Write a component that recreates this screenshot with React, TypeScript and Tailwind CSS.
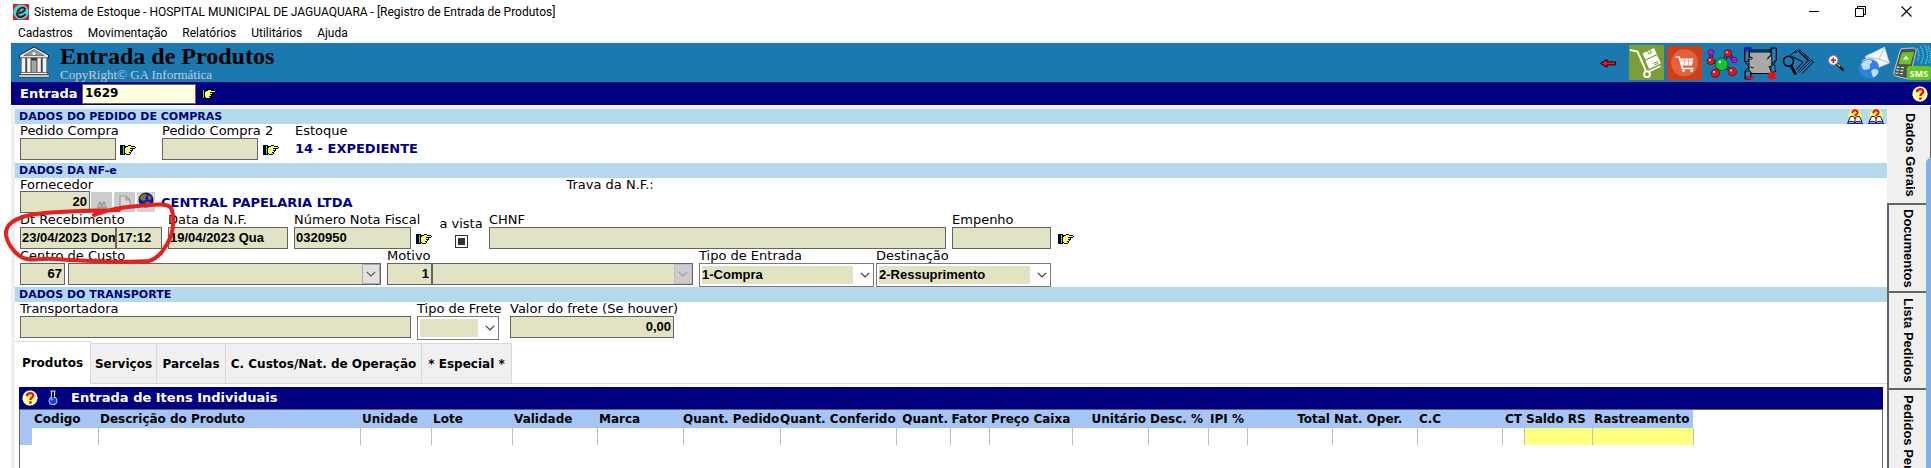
import React from 'react';

const LABEL = 'block h-[14px] whitespace-nowrap text-[13px] leading-[14px] text-black';
const FIELD =
  'block h-[22px] w-full min-w-0 rounded-none border border-[#646464] bg-[#e1e3c4] pl-px pb-[2px] text-[13px] font-bold text-black outline-none font-["Liberation_Sans",Arial,sans-serif]';

/* ---------- icons ---------- */

function AppIcon() {
  return (
    <svg className="h-4 w-4 shrink-0" viewBox="0 0 16 16" aria-hidden="true">
      <rect width="16" height="16" fill="#f01818" />
      <circle cx="8" cy="8" r="7.6" fill="#2fe0e6" />
      <path d="M4.500 9C8.500 9 12 7.500 11.800 5 11.400 2.600 7 3.500 5 7 3 10.800 5 13.500 8 13 10 12.600 11.500 11.500 12.500 10" fill="none" stroke="#16181c" strokeWidth="2" />
      <path d="M5.200 8.200C8 8.200 11 6.900 11 5.300 10.800 3.800 8 4 6.200 6.500 4 10 5.300 12.200 7.500 12" fill="none" stroke="#e8322a" strokeWidth=".9" />
    </svg>
  );
}

function BankIcon() {
  return (
    <svg className="h-8 w-8 shrink-0" viewBox="0 0 32 32" aria-hidden="true">
      <path d="M16 1 1.500 9v3h29V9z" fill="#e2e2e2" stroke="#222" strokeWidth="1" />
      <path d="M16 3.500 6 9.500h20z" fill="#9a9a9a" stroke="#444" strokeWidth=".6" />
      <circle cx="16" cy="7.500" r="1.500" fill="#efefef" />
      <rect x="3.500" y="12" width="25" height="15" fill="#3a3a3a" />
      <g fill="#f2f2f2" stroke="#777" strokeWidth=".5">
        <rect x="3.500" y="12" width="3.800" height="15" />
        <rect x="9" y="12" width="3.800" height="15" />
        <rect x="19.200" y="12" width="3.800" height="15" />
        <rect x="24.700" y="12" width="3.800" height="15" />
      </g>
      <rect x="13.500" y="14.500" width="5" height="12.500" fill="#a5a5a5" />
      <rect x="2.500" y="26.500" width="27" height="2.200" fill="#f2f2f2" stroke="#333" strokeWidth=".6" />
      <rect x=".8" y="28.700" width="30.400" height="2.600" fill="#cfcfcf" stroke="#333" strokeWidth=".7" />
    </svg>
  );
}

const HAND_ROWS = [
  'KKKKK...KKK.....',
  'KKKCKKKKYYYKKKK.',
  'KKKCKKYYYYYYYYYK',
  'KKKCKYYYYYKKKKK.',
  'KKKCKYYYYYYYK...',
  'KKKCKYYYYYKKK...',
  'KKKCKYYYYYYK....',
  'KKKCKYYYYKK.....',
  'KKKCKKYYYYK.....',
  'KKKKK.KKKK......',
];
const HAND_COLORS: Record<string, string> = { K: '#000000', C: '#19e5e8', Y: '#ffff66' };

function HandIcon() {
  return (
    <svg className="block h-[10px] w-4" viewBox="0 0 16 10" aria-hidden="true" shapeRendering="crispEdges">
      {HAND_ROWS.flatMap((row, y) =>
        row.split('').map((c, x) => (c === '.' ? null : <rect key={`${x}-${y}`} x={x} y={y} width="1" height="1" fill={HAND_COLORS[c]} />)),
      )}
    </svg>
  );
}

function HelpIcon() {
  return (
    <svg className="block h-4 w-4" viewBox="0 0 16 16" aria-hidden="true">
      <circle cx="8" cy="8" r="7.500" fill="#ffff8c" />
      <circle cx="8" cy="8" r="7" fill="none" stroke="#ffffe8" strokeWidth="1.200" strokeDasharray="1 1" />
      <path d="M5 6.200C4.800 2.200 11.300 2 11.200 5.600 11.100 7.600 8.600 7.500 8.400 10" fill="none" stroke="#e00f0f" strokeWidth="2.300" />
      <rect x="7.200" y="11.300" width="2.500" height="2.400" fill="#e00f0f" />
    </svg>
  );
}

function BookIcon() {
  return (
    <svg className="block h-[15px] w-4" viewBox="0 0 16 15" aria-hidden="true">
      <circle cx="8" cy="6.500" r="6.500" fill="#ffff60" />
      <path d="M8 13.500C6 11.800 3 12 1 13.200L3.500 7.500C5.500 7 7.500 8 8 9.500 8.500 8 10.500 7 12.500 7.500l2.500 5.700C13 12 10 11.800 8 13.500z" fill="#fff" stroke="#000" strokeWidth=".9" />
      <path d="M0 14.300h16" stroke="#0a1490" strokeWidth="1.200" />
      <path d="M8 10v3.500" stroke="#000" strokeWidth=".9" />
      <path d="M5.400 4.200C5.200.400 10.800.500 10.600 3.700 10.500 5.400 8.200 5.400 8.100 7.200" fill="none" stroke="#e00f0f" strokeWidth="2" />
      <rect x="7.100" y="8.300" width="2" height="1.800" fill="#e00f0f" />
    </svg>
  );
}

function FlaskIcon() {
  return (
    <svg className="block h-4 w-3" viewBox="0 0 12 16" aria-hidden="true">
      <path d="M3.500 1h5M4.500 1.500v5M7.500 1.500v5" stroke="#e8e8e8" strokeWidth="1.200" fill="none" />
      <circle cx="6" cy="10.800" r="4" fill="#1a3cf0" stroke="#d9d9d9" strokeWidth="1" />
      <circle cx="4.700" cy="9.600" r="1" fill="#5ee8ff" />
      <rect x="5.300" y="2" width="1.400" height="5.500" fill="#000" />
    </svg>
  );
}

function Chevron({ color }: { color: string }) {
  return (
    <svg className="h-[6px] w-[10px]" viewBox="0 0 10 6" aria-hidden="true">
      <path d="M.8.8 5 5 9.200.8" fill="none" stroke={color} strokeWidth="1.200" />
    </svg>
  );
}

function ArrowIcon() {
  return (
    <svg className="h-[38px] w-[38px]" viewBox="0 0 38 38">
      <path d="M11.500 20.300 18 16.500v2.400h8.500v3H18v2.400z" fill="#ff0a0a" stroke="#000" strokeWidth=".9" />
    </svg>
  );
}

function TruckIcon() {
  return (
    <svg className="h-[38px] w-[38px]" viewBox="0 0 38 38">
      <rect x="2" y="2" width="35" height="35" rx="1" fill="#7a9f36" />
      <path d="M3 7l7.500 1.500L19 28M22 28.500l11.500-5.500" fill="none" stroke="#fff" strokeWidth="1.900" />
      <circle cx="20" cy="31.200" r="2.900" fill="none" stroke="#fff" strokeWidth="1.900" />
      <g fill="#fff">
        <path d="m15.500 10.500 11.500-5.500 3 6.500-11.500 5.500z" />
        <path d="m18.300 17.500 11.700-5.500 3.800 8.300-11.600 5.700z" />
      </g>
      <path d="m20.500 8 1.500 3 2.500-1.200-1.500-3M26.500 20.500l4.500-2.200M27.300 22l4.500-2.200M18 17.300l12.300-6" fill="none" stroke="#7a9f36" strokeWidth="1" />
    </svg>
  );
}

function CartIcon() {
  return (
    <svg className="h-[38px] w-[38px]" viewBox="0 0 38 38">
      <rect x="2" y="3" width="35" height="34" rx="1.500" fill="#cf3f17" />
      <circle cx="19.500" cy="19.800" r="13.500" fill="#e4613c" />
      <path d="M10.500 14h3.600l3.400 11.500h11" fill="none" stroke="#fff" strokeWidth="1.700" />
      <path d="M15 15.500h13.500L27 22.500H17z" fill="#fff" />
      <path d="M15.500 17.900h13M19 15.500l.8 7M23.500 15.500v7" stroke="#e4613c" strokeWidth=".5" />
      <circle cx="18.500" cy="27.800" r="1.400" fill="#fff" />
      <circle cx="26.800" cy="27.800" r="1.400" fill="#fff" />
    </svg>
  );
}

function MoleculeIcon() {
  return (
    <svg className="h-[38px] w-[38px]" viewBox="0 0 38 38">
      <path d="M8 9.500v8.500l10.500 3.300L25 10.300l6 7M18.700 21.300l-6.400 9M18.700 21.300l10.600 7.400" fill="none" stroke="#0b1b8c" strokeWidth="3.400" />
      <path d="M8 9.500v8.500l10.500 3.300L25 10.300l6 7M18.700 21.300l-6.400 9M18.700 21.300l10.600 7.400" fill="none" stroke="#2b6cf0" strokeWidth="1.200" />
      <g stroke="#111" strokeWidth=".5">
        <circle cx="18.700" cy="21.300" r="6.300" fill="#13c42a" />
        <circle cx="8" cy="9.300" r="2.900" fill="#c414c8" />
        <circle cx="31.300" cy="17" r="2.900" fill="#c414c8" />
        <circle cx="7.700" cy="18" r="3.700" fill="#e31616" />
        <circle cx="25" cy="10.300" r="3.700" fill="#e31616" />
        <circle cx="12.300" cy="30.300" r="4.200" fill="#e31616" />
        <circle cx="29.300" cy="28.700" r="4.200" fill="#e31616" />
      </g>
      <g fill="#fff">
        <circle cx="17" cy="19" r="1.200" />
        <circle cx="6.800" cy="17" r=".9" />
        <circle cx="24" cy="9.300" r=".9" />
        <circle cx="11" cy="29" r="1" />
        <circle cx="28" cy="27.500" r="1" />
      </g>
    </svg>
  );
}

function FrameIcon() {
  return (
    <svg className="h-[38px] w-[38px]" viewBox="0 0 38 38">
      <rect x="8" y="9" width="23" height="21.500" fill="#a9a9a9" stroke="#000" strokeWidth="1" />
      <path d="M3.500 5h5v8.500l3 1.500-2 2M3.500 5v13l4.500 6-4 4v8h6v-7M30 5h5.500v12l-4 6 3.500 6M30 5v7l-3.500 3M30 12.500l-4 4M9.500 24l3 1M28 23l2.500 6M31.500 23 28 24M9 7h21" fill="none" stroke="#000" strokeWidth="1" />
      <path d="M4 8h4v8l-2 3-2-2zM30.500 5.500H35v11l-4 4zM4.500 28h5v6h-5zM30 22h4v7h-4z" fill="#2b82b8" stroke="#000" strokeWidth=".7" />
      <rect x="3.500" y="4" width="7" height="2.800" fill="#0a18f0" />
      <rect x="5.500" y="33.500" width="7" height="2.500" fill="#fb0808" />
      <rect x="27.500" y="29.500" width="7" height="6.500" fill="#fb0808" />
    </svg>
  );
}

function SheetsIcon() {
  return (
    <svg className="h-[38px] w-[38px]" viewBox="0 0 38 38">
      <path d="M11.500 12.500 17.500 6.500 29 17.500 19 28.500M15 9.500l3.500-1M18 7 31.500 18.500 20.500 29.500M20 6.500 34.500 19 23 30.500M13 13.500l11 5.500-6.500 7.500" fill="none" stroke="#000" strokeWidth="1" />
      <circle cx="9.500" cy="18.300" r="5" fill="#1c79b0" stroke="#000" strokeWidth="1.500" />
      <path d="m12 22.500 4.800 9" stroke="#000" strokeWidth="2.800" />
    </svg>
  );
}

function MagnifierIcon() {
  return (
    <svg className="h-[38px] w-[38px]" viewBox="0 0 38 38">
      <circle cx="16.300" cy="17.300" r="4.700" fill="#fff" stroke="#777" strokeWidth="1" strokeDasharray="1.500 .8" />
      <path d="M16.300 14.600v5.400M13.600 17.300h5.400" stroke="#f01010" strokeWidth="1.600" />
      <path d="m20 21 6.500 6.500" stroke="#000" strokeWidth="2.400" />
      <path d="m20.500 21 2.500 2.500" stroke="#e8c33a" strokeWidth="1.200" />
    </svg>
  );
}

function MailIcon() {
  return (
    <svg className="h-[38px] w-[38px]" viewBox="0 0 38 38">
      <path d="M10 13.500 29.500 4 34.500 20l-17 7z" fill="#f4f6fa" stroke="#c5cad6" strokeWidth=".6" />
      <path d="m10 13.500 14 2.500 5.500-12M34.500 20 24 16" fill="none" stroke="#aeb5c5" strokeWidth=".8" />
      <circle cx="14" cy="25.300" r="10.300" fill="#2c82dc" />
      <path d="M6 21.500c2-4.500 8-6 10.500-4s-3 3.500-1.500 6-6 5-7.500 2zM16 28c2-3 7-2.500 7.500 0s-3 6-5.500 6.500z" fill="#b9defa" />
      <path d="M7 18c4-3 10-3 14 0" stroke="#fff" strokeWidth="1" fill="none" opacity=".7" />
    </svg>
  );
}

function SmsIcon() {
  return (
    <svg className="h-[38px] w-[38px]" viewBox="0 0 38 38">
      <path d="M10 5.500 20 5c2.500 0 3.500 1.500 3 3.500L17 33c-.7 2-2 3-4 2.500L3 33c-2-.6-2.600-2-2-4L7 8c.5-1.600 1.400-2.500 3-2.500z" fill="#4a534f" stroke="#c8cec9" strokeWidth="1" />
      <path d="m9 9.500 12-.5-3.500 12.500-12-.5z" fill="#74c02c" />
      <path d="m13 12.500-3 4h6z" fill="#eaf7d8" />
      <path d="m3.500 24 3 .4M8 24.500l3 .4M2.800 27l3 .4M7.300 27.500l3 .4M2.300 30l3 .4M6.800 30.500l3 .4" stroke="#e6e6e6" strokeWidth="1.200" />
      <path d="M24 5c2.500 4 2.500 9 0 13M27.500 3c3.500 6 3.500 12.500 0 18M31.500 2c4 6.500 4 14 0 19.500M35 3c3 6 3 12.500.5 17.500" fill="none" stroke="#3fd3e6" strokeWidth="1.300" strokeDasharray="1.500 .8" />
      <rect x="13.700" y="23" width="24.300" height="14" rx="3" fill="#66c41f" />
      <text x="26" y="33.500" textAnchor="middle" fontSize="9" fontWeight="700" fill="#fff" fontFamily="Open Sans, sans-serif">SMS</text>
    </svg>
  );
}

/* ---------- form parts ---------- */

type FieldProps = { id: string; label: string; width: string; value?: string; right?: boolean };

function Field({ id, label, width, value = '', right = false }: FieldProps) {
  return (
    <div className={`${width} shrink-0`}>
      <label htmlFor={id} className={LABEL}>{label}</label>
      <input id={id} defaultValue={value} className={`${FIELD} ${right ? 'pr-[2px] text-right' : ''}`} />
    </div>
  );
}

function DropDown({ id, label, width, options }: { id: string; label: string; width: string; options: string[] }) {
  return (
    <div className={`${width} shrink-0`}>
      <label htmlFor={id} className={LABEL}>{label}</label>
      <div className="relative flex h-6 border border-[#7a7a7a] bg-white py-[2px] pl-[2px] pr-5">
        <select
          id={id}
          className='h-[18px] min-w-0 flex-1 appearance-none rounded-none bg-[#e1e3c4] text-[13px] leading-[18px] font-bold text-black outline-none font-["Liberation_Sans",Arial,sans-serif]'
        >
          {options.map((o) => <option key={o}>{o}</option>)}
        </select>
        <span className="pointer-events-none absolute inset-y-0 right-0 flex w-4 items-center justify-center">
          <Chevron color="#3c3c3c" />
        </span>
      </div>
    </div>
  );
}

function LookupSelect({ label, width, disabled = false }: { label: string; width: string; disabled?: boolean }) {
  return (
    <div className={`${width} relative mt-[14px] flex h-[22px] shrink-0 border border-[#646464] bg-[#e1e3c4] pr-[18px]`}>
      <select aria-label={label} disabled={disabled} className="min-w-0 flex-1 appearance-none bg-[#e1e3c4] outline-none" />
      <span className={`pointer-events-none absolute inset-y-0 right-0 flex w-[18px] items-center justify-center border ${disabled ? 'border-[#bfbfbf] bg-[#cccccc]' : 'border-[#adadad] bg-[#e1e1e1]'}`}>
        <Chevron color={disabled ? '#a0a0a0' : '#555555'} />
      </span>
    </div>
  );
}

function HandButton({ label, className = '' }: { label: string; className?: string }) {
  return (
    <button type="button" aria-label={label} className={`mb-[5px] self-end ${className}`}>
      <HandIcon />
    </button>
  );
}

function Band({ title, children }: { title: string; children?: React.ReactNode }) {
  return (
    <div className="flex h-[15px] items-center justify-between bg-[#b5d9ec] pl-[4px] pr-[3px]">
      <h2 className="text-[11px] leading-[15px] font-bold whitespace-nowrap text-[#000080]">{title}</h2>
      {children}
    </div>
  );
}

const TOOLS = [
  { name: 'Voltar', Icon: ArrowIcon },
  { name: 'Estoque', Icon: TruckIcon },
  { name: 'Compras', Icon: CartIcon },
  { name: 'Produtos', Icon: MoleculeIcon },
  { name: 'Ajustar', Icon: FrameIcon },
  { name: 'Pesquisar', Icon: SheetsIcon },
  { name: 'Ampliar', Icon: MagnifierIcon },
  { name: 'E-mail', Icon: MailIcon },
  { name: 'SMS', Icon: SmsIcon },
];

const COLUMNS = [
  { t: '', w: 12 },
  { t: 'Codigo', w: 66 },
  { t: 'Descrição do Produto', w: 262 },
  { t: 'Unidade', w: 71 },
  { t: 'Lote', w: 81 },
  { t: 'Validade', w: 85 },
  { t: 'Marca', w: 86 },
  { t: 'Quant. Pedido', w: 97, r: true },
  { t: 'Quant. Conferido', w: 116, r: true },
  { t: 'Quant.', w: 54, r: true },
  { t: 'Fator', w: 39, r: true },
  { t: 'Preço Caixa', w: 83 },
  { t: 'Unitário', w: 76, r: true },
  { t: 'Desc. %', w: 60 },
  { t: 'IPI %', w: 39 },
  { t: 'Total', w: 85, r: true },
  { t: 'Nat. Oper.', w: 85 },
  { t: 'C.C', w: 85 },
  { t: 'CT', w: 22, r: true },
  { t: 'Saldo RS', w: 68, y: true },
  { t: 'Rastreamento', w: 101, y: true },
];

const TABS = [
  { t: 'Serviços', w: 'w-[66px]' },
  { t: 'Parcelas', w: 'w-[69px]' },
  { t: 'C. Custos/Nat. de Operação', w: 'w-[196px]' },
  { t: '* Especial *', w: 'w-[90px]' },
];

export default function App() {
  return (
    <div className='flex h-screen flex-col overflow-hidden bg-white text-black font-["DejaVu_Sans",Verdana,sans-serif]'>
      {/* title bar */}
      <header className='flex h-6 items-center justify-between pr-[19px] pb-px pl-[13px] text-[12px] font-["Roboto",sans-serif]'>
        <div className="flex items-center gap-[5px]">
          <AppIcon />
          <span className="whitespace-nowrap">Sistema de Estoque - HOSPITAL MUNICIPAL DE JAGUAQUARA - [Registro de Entrada de Produtos]</span>
        </div>
        <div className="flex items-center gap-[35px]">
          <button type="button" aria-label="Minimizar"><svg className="block h-[11px] w-[11px]" viewBox="0 0 11 11"><path d="M0 5.500h10" stroke="#000" /></svg></button>
          <button type="button" aria-label="Restaurar"><svg className="block h-[11px] w-[11px]" viewBox="0 0 11 11"><path d="M.5 2.500h8v8h-8zM2.500 2.500v-2h8v8h-2" fill="none" stroke="#000" /></svg></button>
          <button type="button" aria-label="Fechar"><svg className="block h-[11px] w-[11px]" viewBox="0 0 11 11"><path d="m.5.5 10 10M10.500.5l-10 10" stroke="#000" strokeWidth="1.100" /></svg></button>
        </div>
      </header>

      <nav className='flex h-[19px] items-center gap-[15px] pb-px pl-[18px] text-[12px] font-["Roboto",sans-serif]'>
        {['Cadastros', 'Movimentação', 'Relatórios', 'Utilitários', 'Ajuda'].map((m) => (
          <button key={m} type="button">{m}</button>
        ))}
      </nav>

      <div className="flex min-h-0 flex-1 flex-col pl-[11px]">
        {/* page heading */}
        <div className="flex h-[39px] shrink-0 items-start justify-between bg-[#1c79b0] pl-[7px] outline-1 outline-[#f0f0f0]">
          <div className='flex items-center gap-[10px] font-["Liberation_Serif",serif]'>
            <BankIcon />
            <div>
              <h1 className="pt-px text-[24px] leading-[24px] font-bold whitespace-nowrap">Entrada de Produtos</h1>
              <p className="text-[13px] leading-[13px] whitespace-nowrap text-[#c3cbd2]">CopyRight© GA Informática</p>
            </div>
          </div>
          <div className="flex">
            {TOOLS.map(({ name, Icon }) => (
              <button key={name} type="button" aria-label={name} className="w-[38px]"><Icon /></button>
            ))}
          </div>
        </div>

        <div className="flex h-[23px] shrink-0 items-center bg-[#000080] pr-[3px] pl-[9px]">
          <label htmlFor="entrada" className="w-[62px] text-[13px] font-bold text-white">Entrada</label>
          <input id="entrada" defaultValue="1629" className="h-5 w-[114px] rounded-none border border-[#646464] bg-[#ffffe1] px-[2px] pb-px text-[12px] font-bold text-black outline-none" />
          <button type="button" aria-label="Localizar entrada" className="ml-[4px]"><HandIcon /></button>
          <button type="button" aria-label="Ajuda" className="ml-auto"><HelpIcon /></button>
        </div>

        <div className="relative mt-px flex min-h-0 flex-1">
          <main className="flex min-w-0 flex-1 flex-col border-t-[3px] border-l-4 border-[#efefef] bg-white">
            <Band title="DADOS DO PEDIDO DE COMPRAS">
              <div className="flex gap-[5px]">
                <button type="button" aria-label="Ajuda do pedido"><BookIcon /></button>
                <button type="button" aria-label="Ajuda do estoque"><BookIcon /></button>
              </div>
            </Band>
            <div className="flex h-[39px] pb-[3px] pl-[5px]">
              <Field id="pedido" label="Pedido Compra" width="w-[96px]" />
              <HandButton label="Localizar pedido" className="ml-[4px]" />
              <Field id="pedido2" label="Pedido Compra 2" width="ml-[26px] w-[96px]" />
              <HandButton label="Localizar pedido 2" className="ml-[5px]" />
              <div className="ml-4">
                <div className={LABEL}>Estoque</div>
                <div className="text-[13px] leading-[22px] font-bold text-[#000080]">14 - EXPEDIENTE</div>
              </div>
            </div>

            <Band title="DADOS DA NF-e" />
            <div className="relative pl-[5px]">
              <div className="flex">
                <div className="w-[70px] shrink-0">
                  <label htmlFor="fornecedor" className="block h-[13px] text-[13px] leading-[13px]">Fornecedor</label>
                  <input id="fornecedor" defaultValue="20" className={`${FIELD} pr-[2px] text-right`} />
                </div>
                <div className="ml-px flex h-[21px] items-stretch gap-[2px] self-end pb-px">
                  <button type="button" aria-label="Buscar" className="flex w-[21px] items-end justify-center bg-[#cccccc]">
                    <svg className="h-3 w-3" viewBox="0 0 12 12"><path d="M3 2h2v2h2V2h2v2l2 4v3H7.500V8h-3v3H1V8l2-4z" fill="#a3a3a3" stroke="#8f8f8f" strokeWidth=".5" /><path d="M2.500 9h1.500M8.500 9H10M3.500 5.500h1M7.500 5.500h1" stroke="#fff" /></svg>
                  </button>
                  <button type="button" aria-label="Novo" className="flex w-[21px] items-center justify-center bg-[#cccccc]">
                    <svg className="h-[14px] w-3" viewBox="0 0 12 14"><path d="M1 1h6l4 4v8H1zM7 1v4h4" fill="#d8d8d8" stroke="#9b9b9b" strokeWidth="1.200" /></svg>
                  </button>
                  <button type="button" aria-label="Internet" className="flex w-[18px] items-start justify-center bg-[#d3d3d3]">
                    <svg className="h-4 w-4" viewBox="0 0 16 16"><circle cx="8" cy="8" r="7" fill="#1212d8" stroke="#111" /><path d="M3 3.500 7 1.500l2 2-2 2.500 1 2-3 1-3-2zM10 3l3.500 2-1 3-2.500-.500zM7.500 10l4-.500.500 2.500-3 2.500-2-2z" fill="#77801a" /></svg>
                  </button>
                </div>
                <div className="ml-[6px] self-end text-[13px] leading-[21px] font-bold whitespace-nowrap text-[#000080]">CENTRAL PAPELARIA LTDA</div>
                <div className="ml-[214px] text-[13px] leading-[13px] whitespace-nowrap">Trava da N.F.:</div>
              </div>

              <div className="flex">
                <Field id="dtrec" label="Dt Recebimento" width="w-[96px]" value="23/04/2023 Dom" />
                <div className="mt-[14px] w-[46px]">
                  <input aria-label="Hora do recebimento" defaultValue="17:12" className={FIELD} />
                </div>
                <Field id="dtnf" label="Data da N.F." width="ml-[6px] w-[120px]" value="19/04/2023 Qua" />
                <Field id="numnf" label="Número Nota Fiscal" width="ml-[6px] w-[117px]" value="0320950" />
                <HandButton label="Localizar nota" className="ml-[5px]" />
                <div className="mr-1 ml-[5px] flex w-[48px] flex-col items-center pt-1">
                  <label htmlFor="avista" className="h-[18px] text-[13px] leading-[14px] whitespace-nowrap">a vista</label>
                  <input id="avista" type="checkbox" className="h-[13px] w-[13px] appearance-none border border-[#333] bg-[#333] p-0 shadow-[inset_0_0_0_2px_white]" />
                </div>
                <Field id="chnf" label="CHNF" width="w-[457px]" />
                <Field id="empenho" label="Empenho" width="ml-[6px] w-[99px]" />
                <HandButton label="Localizar empenho" className="ml-[7px]" />
              </div>

              <div className="flex">
                <Field id="ccusto" label="Centro de Custo" width="w-[45px]" value="67" right />
                <LookupSelect label="Nome do centro de custo" width="ml-[3px] w-[313px]" />
                <Field id="motivo" label="Motivo" width="ml-[6px] w-[45px]" value="1" right />
                <LookupSelect label="Descrição do motivo" width="w-[261px]" disabled />
                <DropDown id="tipo" label="Tipo de Entrada" width="ml-[6px] w-[175px]" options={['1-Compra']} />
                <DropDown id="dest" label="Destinação" width="ml-[2px] w-[175px]" options={['2-Ressuprimento']} />
              </div>

              {/* freehand mark around the receipt date */}
              <svg className="pointer-events-none absolute top-[22px] -left-[11px] h-[66px] w-[176px]" viewBox="4 200 176 66" aria-hidden="true">
                <path d="M119 210C84 211 50 211 30 215 12 219 5 226 6 235 8 247 19 258 27 259 34 261 40 258 54 259 84 261 120 263 149 261 158 259 167 247 171 236 174 226 174 214 171 208 168 202 150 205 128 207 114 208 104 212 94 215" fill="none" stroke="#e6211d" strokeWidth="4" strokeLinecap="round" />
              </svg>
            </div>

            <Band title="DADOS DO TRANSPORTE" />
            <div className="flex h-[39px] pl-[5px]">
              <Field id="transp" label="Transportadora" width="w-[391px]" />
              <DropDown id="frete" label="Tipo de Frete" width="ml-[6px] w-[82px]" options={['']} />
              <Field id="valor" label="Valor do frete (Se houver)" width="ml-[11px] w-[164px]" value="0,00" right />
            </div>

            {/* product tabs */}
            <div className="flex h-[43px] shrink-0 items-stretch text-[12px] font-bold" role="tablist">
              <button type="button" role="tab" aria-selected="true" className="w-[76px] border-t border-r border-[#d9d9d9] bg-white whitespace-nowrap">Produtos</button>
              {TABS.map((tab) => (
                <button key={tab.t} type="button" role="tab" aria-selected="false" className={`mt-[2px] ${tab.w} border-t border-r border-b border-[#d9d9d9] bg-[#f0f0f0] whitespace-nowrap`}>{tab.t}</button>
              ))}
              <div className="flex-1 border-b border-[#d9d9d9]" />
            </div>

            <section className="mt-[3px] mr-1 ml-1 flex min-h-0 flex-1 flex-col">
              <div className="flex h-[22px] shrink-0 items-center bg-[#000080] pl-[3px] text-white">
                <HelpIcon />
                <span className="ml-[9px]"><FlaskIcon /></span>
                <h2 className="ml-3 text-[13px] font-bold whitespace-nowrap">Entrada de Itens Individuais</h2>
              </div>
              <div className="min-h-0 flex-1 overflow-hidden border-x border-t border-[#646464]">
                <table className="w-px table-fixed border-collapse text-[12px]">
                  <colgroup>{COLUMNS.map((c, i) => <col key={i} style={{ width: c.w }} />)}</colgroup>
                  <thead>
                    <tr className="h-[18px] bg-[#a7c5f4]">
                      {COLUMNS.map((c, i) => (
                        <th key={i} className={`p-0 leading-[18px] font-bold whitespace-nowrap ${c.r ? 'pr-[2px] text-right' : 'pl-[2px] text-left'}`}>{c.t}</th>
                      ))}
                    </tr>
                  </thead>
                  <tbody>
                    <tr className="h-[17px]">
                      {COLUMNS.map((c, i) => (
                        <td key={i} className={`p-0 ${i === 0 ? 'bg-[#a7c5f4]' : 'border-r border-[#c0c0c0]'} ${c.y ? 'bg-[#ffff80]' : ''}`} />
                      ))}
                    </tr>
                  </tbody>
                </table>
              </div>
            </section>
          </main>

          {/* side tabs */}
          <aside className='flex w-[44px] shrink-0 flex-col bg-[#f0f0f0] text-[13px] font-bold whitespace-nowrap font-["Liberation_Sans",Arial,sans-serif]'>
            <button type="button" className="flex h-[97px] shrink-0 items-center justify-center border-r border-[#646464] pl-1"><span className="[writing-mode:vertical-rl]">Dados Gerais</span></button>
            <button type="button" className="flex h-[88px] shrink-0 items-center justify-center border-t-2 border-l-2 border-[#646464] pr-[3px]"><span className="[writing-mode:vertical-rl]">Documentos</span></button>
            <button type="button" className="flex h-[97px] shrink-0 items-center justify-center border-t-2 border-l-2 border-[#646464] pr-[3px]"><span className="[writing-mode:vertical-rl]">Lista Pedidos</span></button>
            <button type="button" className="flex min-h-0 flex-1 items-start justify-center overflow-hidden border-t-2 border-l-2 border-[#646464] pt-[5px] pr-[3px]"><span className="[writing-mode:vertical-rl]">Pedidos Pen</span></button>
          </aside>
          <div className="absolute top-[52px] right-0 bottom-0 w-[5px] rounded-tl-[5px] bg-[#7fb1ea]" />
        </div>
      </div>
    </div>
  );
}
